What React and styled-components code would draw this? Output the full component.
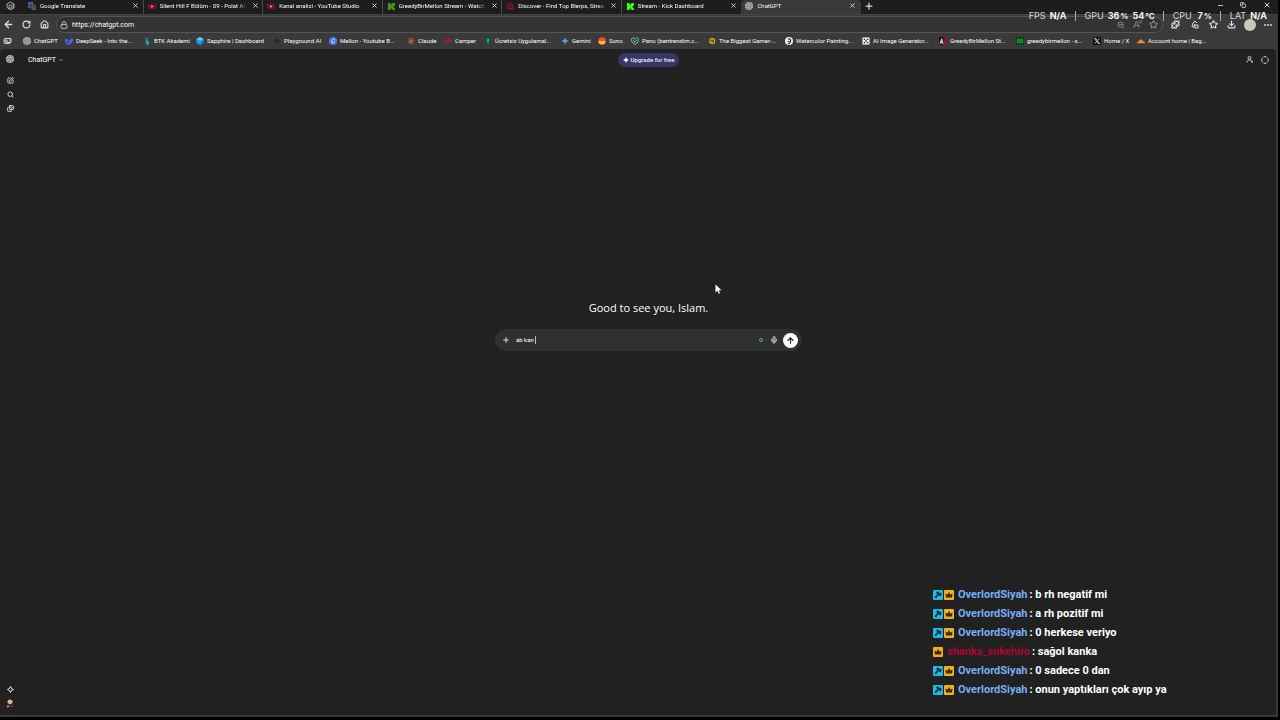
import React,{useState} from 'react'
import styled,{createGlobalStyle} from 'styled-components'
import {ArrowLeft,RotateCw,House,Lock,X,Plus,Minus,Copy,Search,SquarePen,Images,ChevronDown,Mic,ArrowUp,ZoomOut,Star,Download,Ellipsis,Puzzle,CircleDashed} from 'lucide-react'
import {SiOpenai} from 'react-icons/si'

const GlobalStyle = createGlobalStyle`
*{box-sizing:border-box;}
body{
margin:0;
background:#000;
font-family:Roboto,"Open Sans",sans-serif;
font-size:6px;
line-height:10px;
color:#fff;
}
button,input{
font:inherit;
color:inherit;
background:none;
border:0;
padding:0;
margin:0;
outline:none;
}
a{color:inherit;text-decoration:none;}
svg{display:block;flex:none;}
svg.lucide{stroke-width:3px;}
`

const Screen = styled.div`
position:relative;
min-height:100vh;
padding:0 2px 3px 0;
display:flex;
flex-direction:column;
overflow:hidden;
`

const Window = styled.div`
flex:1;
display:flex;
flex-direction:column;
background:#3a3a3a;
`

const TabStrip = styled.div`
display:flex;
height:14px;
background:#1d1d1d;
`

const Workspaces = styled.button`
width:24px;
height:11px;
padding-left:6px;
display:flex;
align-items:center;
`

const Tabs = styled.div`
flex:0 1 837px;
min-width:0;
display:grid;
grid-template-columns:repeat(7,1fr);
`

const Tab = styled.div`
display:flex;
align-items:center;
gap:4px;
min-width:0;
height:14px;
padding:0 3px 3px 4px;
border-radius:${p => p.$active ? '4px 4px 0 0' : '0'};
background:${p => p.$active ? '#3a3a3a' : 'transparent'};
border-right:1px solid ${p => p.$line ? '#4a4a4a' : 'transparent'};
`

const TabTitle = styled.a`
flex:1;
min-width:0;
overflow:hidden;
white-space:nowrap;
mask-image:linear-gradient(90deg,#000 90%,transparent);
`

const IconButton = styled.button`
display:flex;
align-items:center;
justify-content:center;
width:${p => p.$w || 8}px;
height:${p => p.$h || 10}px;
color:${p => p.$color || '#dcdcdc'};
`

const WindowButtons = styled.div`
margin-left:auto;
display:flex;
height:11px;
padding-right:3px;
`

const Toolbar = styled.div`
display:flex;
align-items:center;
height:20px;
border-top:1px solid #444;
`

const NavButtons = styled.div`
display:flex;
width:56px;
`

const AddressBar = styled.label`
flex:1;
display:flex;
align-items:center;
gap:4px;
height:17px;
padding:0 3px;
border:1px solid #555;
border-radius:9px;
background:#333;
`

const Address = styled.input`
flex:1;
min-width:0;
font-size:7px;
`

const ToolbarEnd = styled.div`
display:flex;
align-items:center;
width:115px;
padding-left:3px;
`

const Avatar = styled.button`
width:12px;
height:12px;
margin:0 3px;
border-radius:50%;
background:#cac8b8;
`

const Bookmarks = styled.nav`
display:flex;
align-items:center;
height:15px;
padding-bottom:1px;
overflow:hidden;
`

const Bookmark = styled.a`
flex:none;
display:flex;
align-items:center;
gap:3px;
width:${p => p.$w}px;
white-space:nowrap;
`

const Page = styled.div`
flex:1;
display:flex;
margin:0 2px 2px 0;
background:#212121;
border-radius:4px 4px 0 0;
`

const Sidebar = styled.aside`
display:flex;
flex-direction:column;
width:23px;
padding:5px 0 7px 6px;
`

const SideGroup = styled.div`
display:flex;
flex-direction:column;
gap:4px;
margin-top:${p => p.$bottom ? 'auto' : '11px'};
`

const Main = styled.main`
flex:1;
display:flex;
flex-direction:column;
min-width:0;
padding-right:2px;
`

const Header = styled.header`
display:grid;
grid-template-columns:1fr auto 1fr;
align-items:center;
height:21px;
padding:0 5px;
`

const ModelButton = styled.button`
display:flex;
align-items:center;
gap:2px;
font-size:7px;
`

const Upgrade = styled.button`
display:flex;
align-items:center;
gap:2px;
height:14px;
padding:0 5px;
border-radius:7px;
background:#373669;
color:#f0f0fa;
font-weight:500;
`

const HeaderEnd = styled.div`
display:flex;
justify-content:flex-end;
gap:8px;
`

const Center = styled.section`
display:flex;
flex-direction:column;
align-items:center;
gap:13px;
padding-top:32vh;
`

const Greeting = styled.h1`
margin:0;
font-family:"Open Sans","Noto Sans",sans-serif;
font-size:11px;
line-height:16px;
font-weight:400;
color:#fff;
`

const Composer = styled.form`
display:flex;
align-items:center;
width:307px;
max-width:100%;
height:22px;
padding:0 4px 0 7px;
border-radius:11px;
background:#303030;
`

const Prompt = styled.label`
flex:1;
display:flex;
align-items:center;
padding-left:6px;
`

const PromptInput = styled.input`
field-sizing:content;
max-width:220px;
caret-color:transparent;
`

const Caret = styled.span`
width:1px;
height:8px;
background:#bbb;
`

const StatusDot = styled.span`
width:4px;
height:4px;
margin-right:7px;
border:1px solid #4fa892;
border-radius:50%;
`

const Send = styled.button`
display:flex;
align-items:center;
justify-content:center;
width:15px;
height:15px;
margin-left:5px;
border-radius:50%;
background:#fff;
color:#222;
`

const Stats = styled.div`
position:absolute;
top:9px;
right:13px;
display:flex;
align-items:center;
height:14px;
font-family:Inter,sans-serif;
font-size:9px;
color:#d8d8d8;
pointer-events:none;
white-space:nowrap;
`

const Stat = styled.div`
display:flex;
gap:4px;
& + &{
margin-left:8px;
padding-left:9px;
border-left:1px solid #aaa;
}
b{
min-width:16px;
text-align:right;
color:#f4f4f4;
}
small{
margin-left:1px;
font-size:8px;
}
`

const Chat = styled.ul`
position:absolute;
left:933px;
bottom:21px;
margin:0;
padding:0;
list-style:none;
font-size:11px;
line-height:19px;
font-weight:700;
color:#fff;
`

const ChatLine = styled.li`
display:flex;
align-items:center;
gap:1px;
white-space:nowrap;
`

const ChatName = styled.span`
margin:0 1px 0 3px;
color:${p => p.$color};
`

const Pointer = styled.svg`
position:absolute;
left:715px;
top:284px;
`

const Favicon = ({kind}) => {
  const art = {
    translate: <><rect x="0" y="0" width="6" height="7" rx="1" fill="#4a5f94"/><rect x="4" y="3" width="5" height="6" rx="1" fill="#59606e"/><path d="M4.500 3.500A1.500 1.500 0 1 0 4.500 4H3M5.500 5h3M7 4v1c0 1-.5 2-1.500 3M6 5.500l2 2" stroke="#222a3f" strokeWidth=".7" fill="none"/></>,
    youtube: <><rect x="0" y="2" width="9" height="6" rx="1.500" fill="#7d0d2e"/><path d="M3.700 3.500v3l2.500-1.500z" fill="#e8b8c0"/></>,
    kick: <path d="M1 1h3v2h1V2h1V1h3v3H8v1H7v1h1v1h1v2H6V8H5V7H4v2H1z" fill="#3f9a1b"/>,
    kickBright: <path d="M1 1h3v2h1V2h1V1h3v3H8v1H7v1h1v1h1v2H6V8H5V7H4v2H1z" fill="#35ff13"/>,
    blerp: <><path d="M1.500 3l2-1.500L6 2l1.500 2L6.500 7 3 7.500 1.500 6zM1.500 7.500h7M7 5l1.500 2.500" stroke="#8d1639" strokeWidth="1.200" fill="none"/><circle cx="4.500" cy="4.500" r="1" fill="#8d1639"/></>,
    deepseek: <path d="M0 2c3 0 4 2 5 2 1-.5 1-2 1-3 1 1 2 1 4 1-1 2-1 3-2 4-1 2-3 3-5 3C1 8 0 5 0 2zm2 3c1 2 2 2 3 2L3 4z" fill="#4f60ee" fillRule="evenodd"/>,
    btk: <path d="M2.500 1l2 1v3l1 3M5 4.500c2 0 2 4 0 4l-1.500-1.500V3" stroke="#27a0ad" strokeWidth="1.200" fill="none"/>,
    sapphire: <><path d="M4.500 0l4 2.200v4.600l-4 2.200-4-2.200V2.200z" fill="#1d99ee"/><path d="M.5 2.200l4 2.300 4-2.300L4.500 0z" fill="#5bc9ff"/><path d="M5.500 5.500l2-1v2l-2 1z" fill="#0d6fc0"/></>,
    playground: <circle cx="4.500" cy="4.500" r="3.500" fill="#292929" stroke="#505050" strokeWidth=".8" strokeDasharray="2 1"/>,
    canva: <><circle cx="4.500" cy="4.500" r="4.500" fill="#2c91e6"/><path d="M0 4.500a4.500 4.500 0 0 0 8 2.800L3 1z" fill="#6654dc" opacity=".7"/><path d="M6.200 3.300C5 1.800 3 3 3 5s2 2.300 3.300.8" stroke="#fff" fill="none"/></>,
    claude: <path d="M4.500.5v8M.5 4.500h8M1.700 1.700l5.600 5.600M7.300 1.700L1.700 7.300M3 1l3 7M1 6l7-3" stroke="#c9604b" strokeWidth=".8"/>,
    camper: <><rect x="0" y="3" width="9" height="3" fill="#cf1024"/><path d="M1 4.500h7" stroke="#8c101e" strokeDasharray="1 .5"/></>,
    udemy: <><rect x="2" y="0" width="5" height="9" rx="1" fill="#124b3e"/><path d="M4.500 1.500v6M3 3.500h3" stroke="#18c395" strokeWidth="1.200"/></>,
    gemini: <path d="M4.500 0q.5 4 4.500 4.500-4 .5-4.500 4.500-.5-4-4.500-4.500 4-.5 4.500-4.500z" fill="#6498ee"/>,
    suno: <><circle cx="4.500" cy="4.500" r="4.200" fill="#f14e29"/><path d="M.5 4.500h8a4 4 0 0 1-8 0z" fill="#ffb25a"/></>,
    pano: <path d="M4.500 8.300C1 7 .3 4.500.7 2 2 .3 4 1 4.500 2.500 5 1 7 .3 8.300 2c.4 2.500-.3 5-3.800 6.300zM2.500 3.500L4.500 6l2-2.500" fill="none" stroke="#6fc6ae" strokeWidth="1.100"/>,
    gamer: <><path d="M1 4c0-3 5-4 7-1v4L5 8 2 7z" fill="#e4b32b"/><path d="M0 3.500h6M3 5h4M6 3v4" stroke="#5b3321"/></>,
    watercolor: <><circle cx="4.500" cy="4.500" r="4.500" fill="#f1f1f1"/><path d="M3.500 2.500c3-1.500 4 2 1.500 4.500L3 8M3 5h2" fill="none" stroke="#222" strokeWidth="1.200"/></>,
    generator: <><rect x=".5" y=".5" width="8" height="8" fill="#f0f0f0"/><path d="M2 2h1.500v1.500H2zM5.500 2H7v1.500H5.500zM3.700 3.700h1.600v1.600H3.700zM2 5.500h1.500V7H2zM5.500 5.500H7V7H5.500z" fill="#222"/></>,
    ak: <><rect width="9" height="9" fill="#111"/><path d="M5 0h4v9H5z" fill="#851236"/><path d="M1 8l2-6 1.500 6M3 3v4" stroke="#f4f4f4" fill="none"/></>,
    greedy: <><rect y="0" width="9" height="9" fill="#0a3a14"/><path d="M1 2h7v5H1z" fill="#159a32"/><path d="M2 3h2v1H2zm3 0h2v1H5zM2 5h5v1H2z" fill="#0c5a1c"/></>,
    x: <><rect width="9" height="9" fill="#080808"/><path d="M1.500 1.500h1.700l4.300 6H5.800zM7.300 1.500l-5.600 6" stroke="#eee" strokeWidth=".9" fill="none"/></>,
    cloud: <path d="M0 7c0-1.500 1-2 2-2C2.500 2.500 6 2 6.500 4.500 8 4.500 9 5.500 9 7z" fill="#ed8736"/>,
  }
  if (kind === 'openai') return <SiOpenai size={8} color="#c8c8c8" strokeWidth={1}/>
  return <svg width="8" height="8" viewBox="0 0 9 9">{art[kind]}</svg>
}

const tabs = [
  ['translate','Google Translate'],
  ['youtube','Silent Hill F Bölüm - 09 - Polat Al'],
  ['youtube','Kanal analizi - YouTube Studio'],
  ['kick','GreedyBirMellon Stream - Watch'],
  ['blerp','Discover - Find Top Blerps, Strea'],
  ['kickBright','Stream - Kick Dashboard'],
  ['openai','ChatGPT'],
]

const bookmarks = [
  ['openai','ChatGPT',42],
  ['deepseek','DeepSeek - Into the...',78],
  ['btk','BTK Akademi',53],
  ['sapphire','Sapphire | Dashboard',77],
  ['playground','Playground AI',56],
  ['canva','Mellon - Youtube B...',78],
  ['claude','Claude',37],
  ['camper','Camper',40],
  ['udemy','Ücretsiz Uygulamal...',77],
  ['gemini','Gemini',37],
  ['suno','Suno',33],
  ['pano','Pano (bentrendim.c...',77],
  ['gamer','The Biggest Gamer-...',77],
  ['watercolor','Watercolor Painting...',77],
  ['generator','AI Image Generator...',77],
  ['ak','GreedyBirMellon St...',77],
  ['greedy','greedybirmellon - s...',77],
  ['x','Home / X',44],
  ['cloud','Account home | Bag...',77],
]

const messages = [
  ['OverlordSiyah','b rh negatif mi'],
  ['OverlordSiyah','a rh pozitif mi'],
  ['OverlordSiyah','0 herkese veriyo'],
  ['shanks_sukehiro','sağol kanka'],
  ['OverlordSiyah','0 sadece 0 dan'],
  ['OverlordSiyah','onun yaptıkları çok ayıp ya'],
]

const ModBadge = () => (
  <svg width="10" height="10" viewBox="0 0 10 10">
    <rect width="10" height="10" rx="1" fill="#21b9e6"/>
    <path d="M3 2l2.500-.5L6.500 3l2-.3-.3 3.300-1.700.3-1-1.300L3 8.500 1.500 7l2.700-2.800z" fill="#12303c"/>
  </svg>
)

const CrownBadge = () => (
  <svg width="10" height="10" viewBox="0 0 10 10">
    <rect width="10" height="10" rx="1" fill="#f2b01e"/>
    <path d="M1.500 3.500l2 1.200L5 2l1.500 2.700 2-1.200L8 7.500H2z" fill="#35270a"/>
  </svg>
)

const Browser = () => (
  <>
    <TabStrip>
      <Workspaces aria-label="Workspaces">
        <svg width="9" height="9" viewBox="0 0 9 9" fill="none" stroke="#ccc" strokeWidth=".8">
          <path d="M1 3l3.500-2 3.500 2v4l-3 1.500L2 7.500 1 6zM3 8V4.500L4 4h4M5 8V6h3"/>
        </svg>
      </Workspaces>
      <Tabs>
        {tabs.map(([kind,title],i) => (
          <Tab key={title} $active={i === 6} $line={i < 5}>
            <Favicon kind={kind}/>
            <TabTitle href="#">{title}</TabTitle>
            <IconButton aria-label={`Close ${title}`}><X size={7}/></IconButton>
          </Tab>
        ))}
      </Tabs>
      <IconButton $w={16} $h={11} aria-label="New tab"><Plus size={10}/></IconButton>
      <WindowButtons>
        <IconButton $w={16} aria-label="Minimize"><Minus size={7}/></IconButton>
        <IconButton $w={30} aria-label="Restore"><Copy size={6}/></IconButton>
        <IconButton $w={17} aria-label="Close window"><X size={8}/></IconButton>
      </WindowButtons>
    </TabStrip>
    <Toolbar>
      <NavButtons>
        <IconButton $w={16} aria-label="Back"><ArrowLeft size={11}/></IconButton>
        <IconButton $w={20} aria-label="Reload"><RotateCw size={9}/></IconButton>
        <IconButton $w={16} aria-label="Home"><House size={9}/></IconButton>
      </NavButtons>
      <AddressBar>
        <Lock size={8} color="#bbb"/>
        <Address aria-label="Address" defaultValue="https://chatgpt.com"/>
        <IconButton $w={12} $color="#888" aria-label="Zoom out"><ZoomOut size={8}/></IconButton>
        <IconButton $w={12} $color="#888" aria-label="Read aloud">
          <svg width="9" height="9" viewBox="0 0 9 9" fill="none" stroke="currentColor" strokeWidth=".9"><path d="M.5 8l3-7 3 7M1.500 5.500h4M6 1q1 1 0 2M7.500 0q2 2 0 4"/></svg>
        </IconButton>
        <IconButton $w={12} $color="#888" aria-label="Favorite"><Star size={9}/></IconButton>
      </AddressBar>
      <ToolbarEnd>
        <IconButton $w={18} aria-label="Extensions"><Puzzle size={9}/></IconButton>
        <IconButton $w={22} aria-label="Essentials">
          <svg width="8" height="9" viewBox="0 0 8 9" fill="none" stroke="currentColor"><path d="M1 7l1-4 2-2 2 2M4 4l-2 4M4 5h3v3H4z"/></svg>
        </IconButton>
        <IconButton $w={15} aria-label="Collections"><Star size={9}/></IconButton>
        <IconButton $w={20} aria-label="Downloads"><Download size={9}/></IconButton>
        <Avatar aria-label="Profile"/>
        <IconButton $w={17} aria-label="More"><Ellipsis size={10}/></IconButton>
      </ToolbarEnd>
    </Toolbar>
    <Bookmarks>
      <IconButton $w={23} aria-label="Saved groups">
        <svg width="17" height="8" viewBox="0 0 17 8" fill="none" stroke="#ccc"><rect x="1" y="1.500" width="6" height="5" rx="1"/><path d="M3 1.500h5v4H3zM1 4h4"/></svg>
      </IconButton>
      {bookmarks.map(([kind,name,w]) => (
        <Bookmark href="#" key={name} $w={w}><Favicon kind={kind}/>{name}</Bookmark>
      ))}
    </Bookmarks>
  </>
)

const App = () => {

const [text,setText] = useState('ab kan ');

  return (
   <>
   <GlobalStyle/>
   <Screen>
     <Window>
       <Browser/>
       <Page>
         <Sidebar>
           <IconButton aria-label="ChatGPT home"><SiOpenai size={8} strokeWidth={1}/></IconButton>
           <SideGroup>
             <IconButton aria-label="New chat"><SquarePen size={7}/></IconButton>
             <IconButton aria-label="Search chats"><Search size={7}/></IconButton>
             <IconButton aria-label="Library"><Images size={7}/></IconButton>
           </SideGroup>
           <SideGroup $bottom>
             <IconButton aria-label="Upgrade">
               <svg width="7" height="7" viewBox="0 0 7 7"><path d="M3.500.5q.5 2.500 3 3-2.500.5-3 3-.5-2.500-3-3 2.500-.5 3-3z" fill="none" stroke="#eee"/></svg>
             </IconButton>
             <IconButton aria-label="Account">
               <svg width="8" height="9" viewBox="0 0 8 9"><path d="M0 7l2-2h4l2 2-1 1H1z" fill="#692f2b"/><circle cx="4" cy="3" r="2.500" fill="#ddb99a"/><path d="M2 4l2 2 2-2v3H2z" fill="#35231f"/><path d="M1 8l2-1" stroke="#ddd"/></svg>
             </IconButton>
           </SideGroup>
         </Sidebar>
         <Main>
           <Header>
             <ModelButton>ChatGPT <ChevronDown size={6} color="#aaa"/></ModelButton>
             <Upgrade>
               <svg width="6" height="6" viewBox="0 0 6 6"><path d="M3 0q.4 2.600 3 3-2.600.4-3 3-.4-2.600-3-3 2.600-.4 3-3z" fill="#fff"/></svg>
               Upgrade for free
             </Upgrade>
             <HeaderEnd>
               <IconButton aria-label="Invite">
                 <svg width="7" height="7" viewBox="0 0 7 7" fill="none" stroke="currentColor" strokeWidth=".9"><circle cx="3.500" cy="2" r="1.500"/><path d="M.8 6.500c0-3 4-3 4.500-1.500M5 5.700h2M6 4.700v2"/></svg>
               </IconButton>
               <IconButton aria-label="Temporary chat"><CircleDashed size={8}/></IconButton>
             </HeaderEnd>
           </Header>
           <Center>
             <Greeting>Good to see you, Islam.</Greeting>
             <Composer onSubmit={e => e.preventDefault()}>
               <IconButton type="button" aria-label="Attach"><Plus size={8}/></IconButton>
               <Prompt>
                 <PromptInput aria-label="Ask anything" value={text} onChange={e => setText(e.target.value)}/>
                 <Caret/>
               </Prompt>
               <StatusDot/>
               <IconButton type="button" aria-label="Dictate"><Mic size={8}/></IconButton>
               <Send aria-label="Send"><ArrowUp size={9}/></Send>
             </Composer>
           </Center>
         </Main>
       </Page>
     </Window>

     <Stats>
       <Stat>FPS <b>N/A</b></Stat>
       <Stat>GPU <b>36<small>%</small></b><b>54<small>°C</small></b></Stat>
       <Stat>CPU <b>7<small>%</small></b></Stat>
       <Stat>LAT <b>N/A</b></Stat>
     </Stats>

     <Chat>
       {messages.map(([name,message]) => (
         <ChatLine key={message}>
           {name === 'OverlordSiyah' && <ModBadge/>}
           <CrownBadge/>
           <ChatName $color={name === 'OverlordSiyah' ? '#78aef5' : '#b00433'}>{name}</ChatName>
           : {message}
         </ChatLine>
       ))}
     </Chat>

     <Pointer width="7" height="11" viewBox="0 0 7 11"><path d="M.5.500v8l2-1.700 1.300 3 1.200-.5-1.200-3H6.500z" fill="#fff"/></Pointer>
   </Screen>
   </>
  )
}

export default App
